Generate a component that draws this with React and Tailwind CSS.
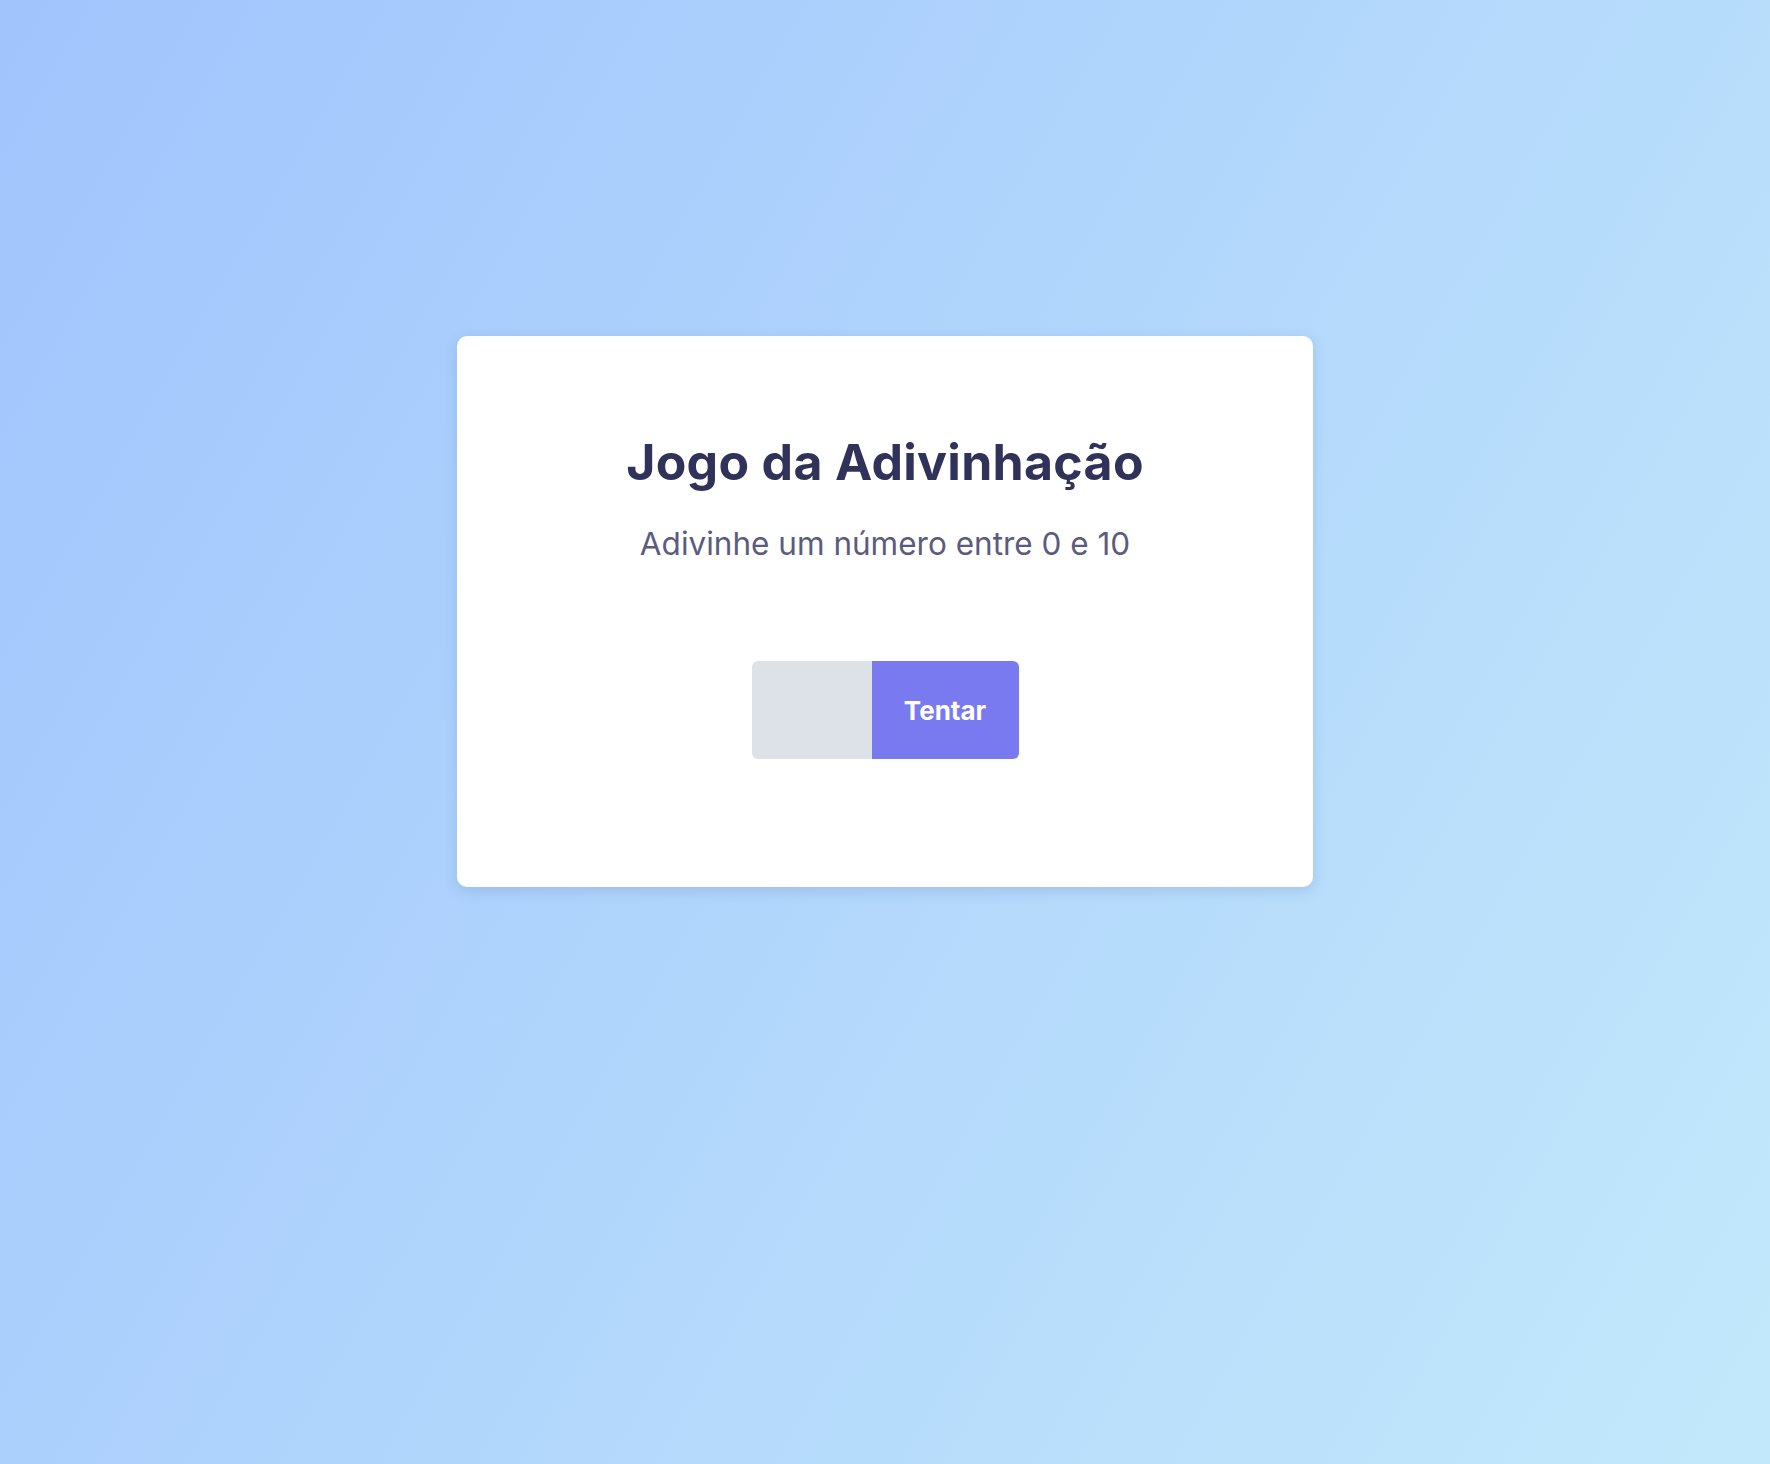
import { useState } from "react";

export default function App() {
  const [guess, setGuess] = useState("");

  return (
    <div className="min-h-screen w-full bg-[linear-gradient(120deg,#a1c4fd_0%,#c2e9fb_100%)] flex justify-center pt-[336px]">
      <div className="w-[856px] h-[551px] bg-white rounded-[10px] shadow-[0_4px_14px_rgba(60,90,150,0.18)] flex flex-col items-center">
        <h1 className="mt-[96px] text-[50px] leading-[60px] font-bold text-[#31325a] tracking-[0.3px]" style={{ fontFamily: "Inter, 'Liberation Sans', sans-serif" }}>
          Jogo da Adivinhação
        </h1>
        <p className="mt-[32px] text-[31.5px] leading-[40px] text-[#5b5b80]" style={{ fontFamily: "Inter, 'Liberation Sans', sans-serif" }}>
          Adivinhe um número entre 0 e 10
        </p>
        <form className="mt-[97px] flex" onSubmit={(e) => e.preventDefault()}>
          <input
            type="number"
            value={guess}
            onChange={(e) => setGuess(e.target.value)}
            className="w-[120px] h-[98px] bg-[#dde1e8] rounded-l-[6px] outline-none px-3 text-2xl"
          />
          <button
            type="submit"
            className="w-[147px] h-[98px] bg-[#7a7af0] text-white rounded-r-[6px] text-[26px] font-bold"
            style={{ fontFamily: "Inter, 'Liberation Sans', sans-serif" }}
          >
            Tentar
          </button>
        </form>
      </div>
    </div>
  );
}
